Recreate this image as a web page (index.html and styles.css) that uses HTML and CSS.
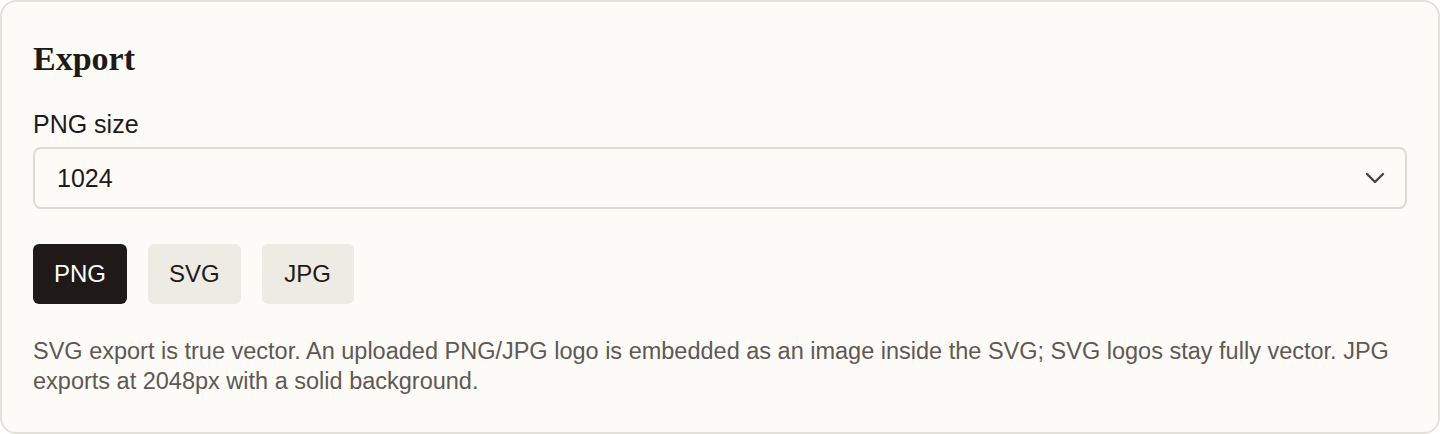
FILE: index.html
```html
<!DOCTYPE html>
<html lang="en">
  <head>
    <meta charset="UTF-8" />
    <meta name="viewport" content="width=device-width, initial-scale=1.0" />
    <title>Export</title>
    <link rel="stylesheet" href="styles.css">
  </head>
  <body>
    <section class="panel">
      <h2 class="panel-title">Export</h2>

      <label class="field-label" for="pngSize">PNG size</label>
      <div class="select-wrap">
        <select id="pngSize">
          <option value="512">512</option>
          <option value="1024" selected>1024</option>
          <option value="2048">2048</option>
        </select>
        <svg class="chevron" width="20" height="12" viewBox="0 0 20 12" aria-hidden="true">
          <path d="M2 2 L10 10 L18 2" fill="none" stroke="#4a4440" stroke-width="2.4" stroke-linecap="round" stroke-linejoin="round" />
        </svg>
      </div>

      <div class="format-row">
        <button class="format active">PNG</button>
        <button class="format">SVG</button>
        <button class="format">JPG</button>
      </div>

      <p class="note">
        SVG export is true vector. An uploaded PNG/JPG logo is embedded as an image inside the SVG; SVG logos stay fully vector. JPG exports at 2048px with a solid background.
      </p>
    </section>
  </body>
</html>
```

FILE: styles.css
```css
body {
  margin: 0;
  padding: 0;
  background-color: #ffffff;
  font-family: "Liberation Sans", Arial, sans-serif;
  color: #1f1a17;
}

.panel {
  box-sizing: border-box;
  height: 434px;
  padding: 31px 31px 0;
  background-color: #fcfbf8;
  border: 2px solid #e4e1db;
  border-radius: 16px;
}

.panel-title {
  margin: 0 0 24px;
  font-family: "Liberation Serif", "Times New Roman", serif;
  font-size: 34px;
  font-weight: bold;
  line-height: 52px;
}

.field-label {
  display: block;
  margin-bottom: 8px;
  font-size: 25px;
  line-height: 30px;
}

/* Drop-down styling */
.select-wrap {
  position: relative;
}
select {
  box-sizing: border-box;
  width: 100%;
  height: 62px;
  padding: 0 22px;
  font-family: inherit;
  font-size: 25px;
  color: #1f1a17;
  background-color: #fcfbf8;
  border: 2px solid #dedad3;
  border-radius: 8px;
  appearance: none;
  -webkit-appearance: none;
}
.chevron {
  position: absolute;
  right: 22px;
  top: 25px;
  pointer-events: none;
}

.format-row {
  display: flex;
  gap: 21px;
  margin-top: 35px;
}
.format {
  min-width: 92px;
  height: 60px;
  padding: 0 21px;
  font-family: inherit;
  font-size: 24px;
  color: #1f1a17;
  background-color: #eeebe5;
  border: none;
  border-radius: 6px;
  cursor: pointer;
}
.format.active {
  background-color: #1f1a17;
  color: #ffffff;
}

.note {
  margin: 32px 0 0;
  font-size: 23.5px;
  line-height: 30px;
  color: #5f5853;
}
```
